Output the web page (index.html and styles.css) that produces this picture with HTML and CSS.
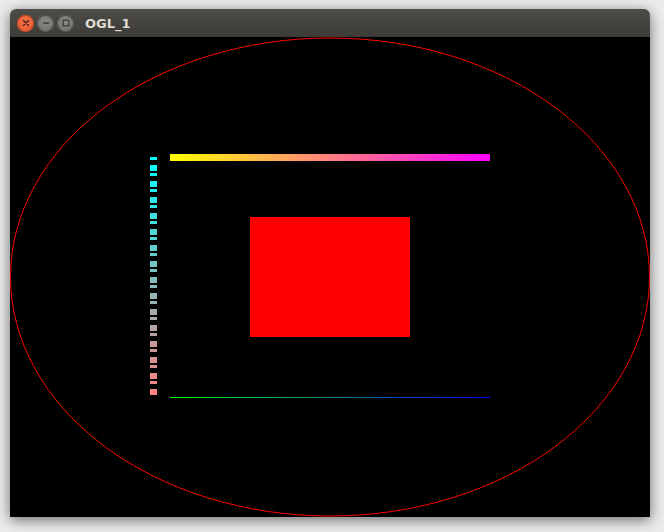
FILE: index.html
```html
<!DOCTYPE html>
<html>
<head>
<meta charset="utf-8">
<title>OGL_1</title>
<link rel="stylesheet" href="styles.css">
</head>
<body>
<div class="desk">
  <div class="window">
    <div class="titlebar">
      <div class="buttons">
        <span class="btn close"><svg width="8" height="8" viewBox="0 0 8 8"><path d="M1.5 1.5L6.5 6.5M6.5 1.5L1.5 6.5" stroke="#4a1a0c" stroke-width="1.4" stroke-linecap="round"/></svg></span>
        <span class="btn"><svg width="8" height="8" viewBox="0 0 8 8"><path d="M1 4H7" stroke="#3a3935" stroke-width="1.4"/></svg></span>
        <span class="btn"><svg width="8" height="8" viewBox="0 0 8 8"><rect x="1.2" y="1.2" width="5.6" height="5.6" fill="none" stroke="#3a3935" stroke-width="1.2"/></svg></span>
      </div>
      <span class="title">OGL_1</span>
    </div>
    <div class="canvas">
      <svg width="640" height="480" viewBox="0 0 640 480">
        <defs>
          <linearGradient id="top" x1="160" y1="0" x2="480" y2="0" gradientUnits="userSpaceOnUse">
            <stop offset="0" stop-color="#ffff00"/>
            <stop offset="0.5" stop-color="#ff8080"/>
            <stop offset="1" stop-color="#ff00ff"/>
          </linearGradient>
          <linearGradient id="bottom" x1="160" y1="0" x2="480" y2="0" gradientUnits="userSpaceOnUse">
            <stop offset="0" stop-color="#00ff00"/>
            <stop offset="1" stop-color="#0000ff"/>
          </linearGradient>
          <linearGradient id="side" x1="0" y1="120" x2="0" y2="360" gradientUnits="userSpaceOnUse">
            <stop offset="0" stop-color="#00ffff"/>
            <stop offset="1" stop-color="#ff7f7f"/>
          </linearGradient>
        </defs>
        <ellipse cx="320" cy="240" rx="319.5" ry="239" fill="none" stroke="#ff0000" stroke-width="1"/>
        <rect x="160" y="117" width="320" height="7" fill="url(#top)"/>
        <rect x="240" y="180" width="160" height="120" fill="#ff0000"/>
        <line x1="143.5" y1="120" x2="143.5" y2="360" stroke="url(#side)" stroke-width="7" stroke-dasharray="3 5 6 2"/>
        <rect x="160" y="360" width="320" height="1" fill="url(#bottom)"/>
      </svg>
    </div>
  </div>
</div>
</body>
</html>
```
FILE: styles.css
```css
html, body {
  margin: 0;
  padding: 0;
  background: #ececec;
  width: 664px;
  height: 532px;
  overflow: hidden;
}
.desk {
  padding: 9px 0 0 10px;
}
.window {
  width: 640px;
  box-shadow: 0 3px 14px rgba(0, 0, 0, 0.55);
  border-radius: 6px 6px 0 0;
}
.titlebar {
  height: 28px;
  display: flex;
  align-items: center;
  background: linear-gradient(#4d4c47, #3c3b37);
  border-radius: 6px 6px 0 0;
  padding-left: 7px;
}
.buttons {
  display: flex;
  gap: 3px;
}
.btn {
  width: 17px;
  height: 17px;
  border-radius: 50%;
  background: radial-gradient(circle at 50% 40%, #8a8983, #6c6b66);
  box-shadow: inset 0 0 0 1px #52514c;
  display: flex;
  align-items: center;
  justify-content: center;
}
.btn.close {
  background: radial-gradient(circle at 50% 40%, #f5774d, #e0502a);
  box-shadow: inset 0 0 0 1px #b8461f;
}
.title {
  margin-left: 11px;
  font-family: "DejaVu Sans", sans-serif;
  font-weight: bold;
  font-size: 13px;
  color: #dfdbd2;
}
.canvas {
  width: 640px;
  height: 480px;
  background: #000;
}
.canvas svg {
  display: block;
}
```
